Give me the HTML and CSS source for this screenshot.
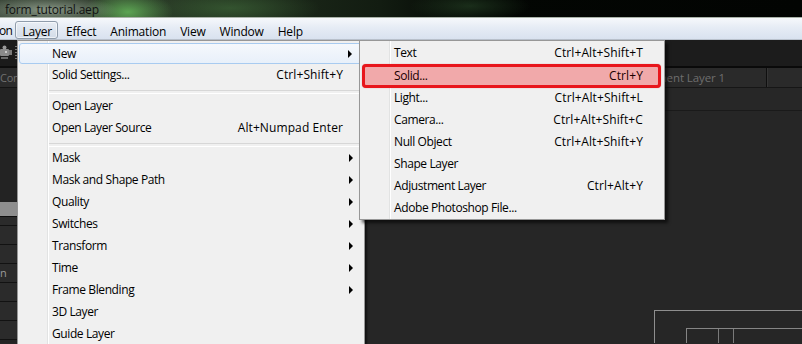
FILE: index.html
```html
<!DOCTYPE html>
<html>
<head>
<meta charset="utf-8">
<link rel="stylesheet" href="styles.css">
</head>
<body>
<div class="titlebar"><span class="title">form_tutorial.aep</span></div>
<div class="menubar">
  <span class="mi first">on</span>
  <span class="mi active">Layer</span>
  <span class="mi">Effect</span>
  <span class="mi">Animation</span>
  <span class="mi">View</span>
  <span class="mi">Window</span>
  <span class="mi">Help</span>
</div>
<div class="workspace">
  <div class="leftpanel">
    <div class="lp-tools">
      <svg class="cam" width="14" height="16" viewBox="0 0 14 16">
        <rect x="0" y="4" width="9" height="7" rx="1" fill="#8a8a8a"/>
        <circle cx="4.5" cy="2.5" r="2" fill="#9a9a9a"/>
        <rect x="9" y="5" width="3" height="5" fill="#7a7a7a"/>
        <rect x="1" y="12" width="7" height="2" fill="#6a6a6a"/>
        <rect x="5" y="6" width="2" height="2" fill="#c8c8c8"/>
      </svg>
      <span class="grip"></span>
    </div>
    <div class="lp-tab"><span>Con</span></div>
    <div class="lp-body"></div>
    <div class="lp-sel"></div>
    <div class="lp-row short"></div>
    <div class="lp-row"></div>
    <div class="lp-row"></div>
    <div class="lp-row"><span class="clip">n</span></div>
    <div class="lp-row"></div>
    <div class="lp-row"></div>
    <div class="lp-row"></div>
  </div>
  <div class="rightpanel">
    <div class="rp-tools"></div>
    <div class="rp-tabs">
      <div class="tab main">nent Layer 1</div>
      <div class="tab"></div>
    </div>
    <div class="rp-bar"></div>
    <div class="viewer">
      <div class="outer">
        <div class="inner">
          <div class="cell c1"></div>
          <div class="cell c2"></div>
          <div class="cell c3"></div>
        </div>
      </div>
    </div>
  </div>

  <div class="menu layermenu">
    <div class="item hover"><span class="label">New</span><span class="arr"><i class="tri"></i></span></div>
    <div class="item"><span class="label">Solid Settings...</span><span class="key">Ctrl+Shift+Y</span><span class="arr"></span></div>
    <div class="sep"></div>
    <div class="item"><span class="label">Open Layer</span><span class="arr"></span></div>
    <div class="item"><span class="label">Open Layer Source</span><span class="key">Alt+Numpad Enter</span><span class="arr"></span></div>
    <div class="sep tight"></div>
    <div class="item"><span class="label">Mask</span><span class="arr"><i class="tri"></i></span></div>
    <div class="item"><span class="label">Mask and Shape Path</span><span class="arr"><i class="tri"></i></span></div>
    <div class="item"><span class="label">Quality</span><span class="arr"><i class="tri"></i></span></div>
    <div class="item"><span class="label">Switches</span><span class="arr"><i class="tri"></i></span></div>
    <div class="item"><span class="label">Transform</span><span class="arr"><i class="tri"></i></span></div>
    <div class="item"><span class="label">Time</span><span class="arr"><i class="tri"></i></span></div>
    <div class="item"><span class="label">Frame Blending</span><span class="arr"><i class="tri"></i></span></div>
    <div class="item"><span class="label">3D Layer</span><span class="arr"></span></div>
    <div class="item"><span class="label">Guide Layer</span><span class="arr"></span></div>
  </div>

  <div class="menu submenu">
    <div class="item"><span class="label">Text</span><span class="key">Ctrl+Alt+Shift+T</span><span class="arr"></span></div>
    <div class="item marked"><span class="label">Solid...</span><span class="key">Ctrl+Y</span><span class="arr"></span></div>
    <div class="item"><span class="label">Light...</span><span class="key">Ctrl+Alt+Shift+L</span><span class="arr"></span></div>
    <div class="item"><span class="label">Camera...</span><span class="key">Ctrl+Alt+Shift+C</span><span class="arr"></span></div>
    <div class="item"><span class="label">Null Object</span><span class="key">Ctrl+Alt+Shift+Y</span><span class="arr"></span></div>
    <div class="item"><span class="label">Shape Layer</span><span class="arr"></span></div>
    <div class="item"><span class="label">Adjustment Layer</span><span class="key">Ctrl+Alt+Y</span><span class="arr"></span></div>
    <div class="item"><span class="label">Adobe Photoshop File...</span><span class="arr"></span></div>
  </div>
</div>
</body>
</html>
```

FILE: styles.css
```css
* { box-sizing: border-box; }
html, body {
  margin: 0;
  padding: 0;
}
body {
  width: 802px;
  height: 344px;
  overflow: hidden;
  background: #262626;
  font-family: "Open Sans", "Noto Sans", sans-serif;
  font-size: 12px;
  color: #000;
}

/* title bar */
.titlebar {
  height: 18px;
  border-bottom: 1px solid #a9b2a8;
  background:
    radial-gradient(ellipse 70px 14px at 48px 10px, rgba(150,165,148,0.85), rgba(150,165,148,0) 100%),
    radial-gradient(ellipse 45px 22px at 128px 12px, rgba(95,170,85,0.95), rgba(95,170,85,0) 100%),
    radial-gradient(ellipse 90px 20px at 230px 8px, rgba(60,100,55,0.7), rgba(60,100,55,0) 100%),
    radial-gradient(ellipse 60px 16px at 470px 6px, rgba(40,70,40,0.6), rgba(40,70,40,0) 100%),
    linear-gradient(90deg, #3b4739 0, #22301f 200px, #121c11 380px, #030603 480px, #020402 100%);
  display: flex;
  align-items: center;
  padding-top: 3px;
}
.title {
  padding-left: 5px;
  color: #111;
  line-height: 14px;
  letter-spacing: -0.2px;
}

/* menu bar */
.menubar {
  height: 22px;
  border-bottom: 1px solid #b9c1cc;
  background: linear-gradient(#f6f8fb, #e6ecf5 45%, #d9e2ef);
  display: flex;
  align-items: center;
  padding-top: 2px;
}
.mi {
  height: 18px;
  line-height: 17px;
  padding: 1px 6px 0;
  border: 1px solid transparent;
  letter-spacing: -0.2px;
  white-space: nowrap;
}
.mi.first {
  padding: 1px 3px 0 0;
  margin-left: -1px;
  border: 0;
  letter-spacing: -0.6px;
}
.mi.active {
  border-color: #8f9cab;
  border-radius: 3px;
  padding: 1px 5px 0 6px;
  margin-right: 1px;
  background: linear-gradient(#e8edf4, #d3dce8);
  box-shadow: inset 0 0 0 1px rgba(255,255,255,0.6);
}

/* workspace */
.workspace {
  position: relative;
  display: flex;
  height: 303px;
}
.leftpanel {
  width: 17px;
  flex: none;
  overflow: hidden;
  display: flex;
  flex-direction: column;
  background: #242424;
}
.lp-tools {
  height: 28px;
  background: #1b1b1b;
  border-bottom: 2px solid #0d0d0d;
  display: flex;
  align-items: flex-start;
  padding-top: 5px;
}
.cam { flex: none; }
.grip {
  width: 2px;
  height: 13px;
  margin-left: 1px;
  margin-top: 1px;
  background: repeating-linear-gradient(#777 0 1px, transparent 1px 3px);
}
.lp-tab {
  height: 20px;
  background: #2b2b2b;
  border-bottom: 1px solid #141414;
  color: #707070;
  line-height: 19px;
  white-space: nowrap;
  overflow: hidden;
  font-size: 11px;
  letter-spacing: -0.3px;
}
.lp-body {
  height: 114px;
  background: #232323;
}
.lp-sel {
  height: 15px;
  background: #8e8e8e;
  border-bottom: 1px solid #0e0e0e;
}
.lp-row {
  height: 19px;
  background: #2b2b2b;
  border-bottom: 1px solid #121212;
  flex: none;
  display: flex;
  align-items: center;
}
.lp-row.short { height: 9px; }
.lp-row .clip {
  color: #9a9a9a;
  font-size: 11px;
  line-height: 12px;
}

.rightpanel {
  flex: 1;
  display: flex;
  flex-direction: column;
  overflow: hidden;
}
.rp-tools {
  height: 28px;
  background: #1c1c1c;
  border-bottom: 2px solid #0a0a0a;
  flex: none;
}
.rp-tabs {
  height: 20px;
  display: flex;
  background: #2a2a2a;
  border-bottom: 1px solid #161616;
  flex: none;
}
.tab {
  border-right: 1px solid #0f0f0f;
  box-shadow: 1px 0 0 #353535;
}
.tab.main {
  width: 750px;
  text-align: right;
  padding-right: 41px;
  color: #6e6e6e;
  line-height: 19px;
  font-size: 11.5px;
  letter-spacing: -0.1px;
}
.tab:last-child { flex: 1; border-right: 0; box-shadow: none; }
.rp-bar {
  height: 23px;
  background: #272727;
  border-bottom: 1px solid #1a1a1a;
  flex: none;
}
.viewer {
  flex: 1;
  background: #262626;
  padding: 199px 0 0 637px;
  display: flex;
}
.outer {
  flex: 1;
  border-top: 1px solid #8e8e8e;
  border-left: 1px solid #8e8e8e;
  padding: 17px 0 0 31px;
  display: flex;
}
.inner {
  flex: 1;
  border-top: 1px solid #858585;
  border-left: 1px solid #858585;
  display: flex;
}
.cell { border-right: 1px solid #7a7a7a; }
.c1 { width: 32px; }
.c2 { width: 15px; }
.c3 { flex: 1; border-right: 0; }

/* menus */
.menu {
  position: absolute;
  top: 0;
  background:
    linear-gradient(90deg, transparent 29px, #e2e3e3 29px, #e2e3e3 30px, #ffffff 30px, #ffffff 31px, transparent 31px),
    #f0f0f0;
  border: 1px solid #979797;
  padding: 1px 0;
  box-shadow: 2px 2px 2px rgba(0,0,0,0.55);
}
.layermenu {
  left: 17px;
  width: 348px;
  height: 320px;
}
.submenu {
  left: 359px;
  width: 306px;
  height: 180px;
  box-shadow: 3px 3px 3px rgba(0,0,0,0.6);
}
.item {
  height: 22px;
  display: flex;
  align-items: center;
  padding-left: 34px;
  padding-bottom: 2px;
  white-space: nowrap;
  letter-spacing: -0.4px;
}
.item .label { flex: 1; }
.item .key { text-align: right; letter-spacing: 0.1px; }
.item .arr {
  width: 21px;
  height: 20px;
  padding-left: 6px;
  display: flex;
  align-items: center;
  flex: none;
}
.tri {
  display: block;
  width: 0;
  height: 0;
  border-left: 4px solid #000;
  border-top: 4px solid transparent;
  border-bottom: 4px solid transparent;
  margin-top: 1px;
}
.item.hover {
  margin: 1px 1px 0 1px;
  height: 21px;
  padding-left: 32px;
  padding-bottom: 1px;
  border: 1px solid #a8cbf0;
  border-radius: 3px;
  background: linear-gradient(#f5f8fc, #e8f0fa);
}
.item.hover .arr { width: 20px; height: 18px; }
.sep {
  height: 9px;
  margin-left: 31px;
  padding-top: 4px;
}
.sep::before {
  content: "";
  display: block;
  height: 2px;
  border-top: 1px solid #d7d7d7;
  border-bottom: 1px solid #fff;
}
.sep.tight { height: 8px; padding-top: 4px; }
.item.marked {
  height: 24px;
  margin: 0 3px -1px 2px;
  padding-left: 29px;
  padding-bottom: 1px;
  border: 3px solid #e8161c;
  border-radius: 4px;
  background: #f1a9aa;
  box-shadow: 0 0 1px rgba(200,0,0,0.5);
  color: #1a0000;
}
.item.marked .arr { width: 15px; height: 17px; }
```
